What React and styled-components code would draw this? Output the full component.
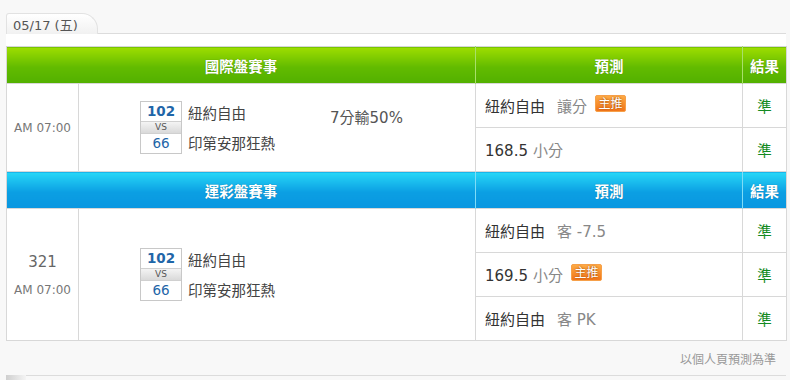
import React from "react";
import styled, { createGlobalStyle } from "styled-components";

const GlobalStyle = createGlobalStyle`
  html, body {
    margin: 0;
    padding: 0;
    background: #ffffff;
    font-family: "DejaVu Sans", "Noto Sans CJK TC", sans-serif;
  }
`;

const Panel = styled.div`
  width: 790px;
  background: #f8f8f8;
  padding-bottom: 4px;
`;

const TabBar = styled.div`
  height: 33px;
  margin: 0 4px 0 6px;
  display: flex;
  align-items: flex-end;
  border-bottom: 1px solid #dcdcdc;
`;

const Tab = styled.div`
  width: 92px;
  height: 21px;
  box-sizing: border-box;
  padding-left: 6px;
  display: flex;
  align-items: center;
  background: linear-gradient(#ffffff, #f1f1f1);
  border: 1px solid #e2e2e2;
  border-bottom: none;
  border-radius: 3px 16px 0 0;
  font-size: 13px;
  color: #555;
  margin-bottom: -1px;
`;

const Content = styled.div`
  background: #fff;
  margin-left: 6px;
  margin-right: 4px;
  padding-top: 12px;
`;

const Table = styled.table`
  width: 780px;
  table-layout: fixed;
  border-collapse: collapse;
  background: #fff;
  border: 1px solid #d6d6d6;
`;

const HeadCell = styled.th`
  height: 37px;
  padding: 0;
  box-sizing: border-box;
  color: #fff;
  font-size: 14.5px;
  font-weight: bold;
  text-align: center;
  text-shadow: 0 0 1px rgba(0, 0, 0, 0.35);
  background: ${(p) =>
    p.$tone === "blue"
      ? "linear-gradient(#27d7f7, #0b9fe3 55%, #0a97e0)"
      : "linear-gradient(#9edd00, #62bb00 55%, #52b000)"};
  border-right: 1px solid
    ${(p) => (p.$tone === "blue" ? "#7fdcf7" : "#a8e06a")};
  &:last-child {
    border-right: none;
  }
`;

const TimeCell = styled.td`
  border: 1px solid #d8d8d8;
  text-align: center;
  vertical-align: middle;
  color: #777;
  padding: 0;
`;

const Num = styled.div`
  font-size: 15px;
  color: #666;
  margin-bottom: 12px;
`;

const Clock = styled.div`
  font-size: 12px;
`;

const MatchCell = styled.td`
  border: 1px solid #d8d8d8;
  vertical-align: middle;
  padding: 0 0 0 61px;
`;

const Match = styled.div`
  display: flex;
  align-items: center;
`;

const ScoreBox = styled.div`
  width: 40px;
  border: 1px solid #c8c8c8;
  display: flex;
  flex-direction: column;
  text-align: center;
`;

const Score = styled.div`
  height: 19px;
  line-height: 19px;
  font-size: 13.5px;
  color: #1f66a8;
  font-weight: ${(p) => (p.$bold ? "bold" : "normal")};
`;

const Vs = styled.div`
  height: 11px;
  line-height: 11px;
  font-size: 9px;
  color: #555;
  background: linear-gradient(#f4f4f4, #d9d9d9);
  border-top: 1px solid #d0d0d0;
  border-bottom: 1px solid #d0d0d0;
`;

const Teams = styled.div`
  width: 142px;
  margin-left: 6px;
  display: flex;
  flex-direction: column;
  gap: 9px;
  font-size: 14.5px;
  color: #444;
`;

const Handicap = styled.div`
  align-self: flex-start;
  margin-top: 5px;
  font-size: 15px;
  color: #555;
`;

const PredCell = styled.td`
  height: 44px;
  box-sizing: border-box;
  border: 1px solid #d8d8d8;
  padding: 0 0 0 9px;
  font-size: 15px;
  color: #333;
  white-space: nowrap;
`;

const Muted = styled.span`
  color: #888;
  margin-left: ${(p) => p.$gap || 0}px;
`;

const Badge = styled.span`
  display: inline-block;
  position: relative;
  top: -4px;
  margin-left: 8px;
  width: 31px;
  height: 17px;
  line-height: 16px;
  box-sizing: border-box;
  text-align: center;
  font-size: 12px;
  color: #fff;
  border-radius: 2px;
  border: 1px solid #f6a04a;
  background: linear-gradient(#fdaa44, #f2761a);
  text-shadow: 0 0 2px #8a3a00;
`;

const ResultCell = styled.td`
  border: 1px solid #d8d8d8;
  text-align: center;
  font-size: 14.5px;
  color: #138a22;
`;

const Note = styled.div`
  height: 34px;
  display: flex;
  align-items: center;
  justify-content: flex-end;
  padding-right: 14px;
  font-size: 12px;
  color: #999;
  background: #f8f8f8;
`;

const BottomLine = styled.div`
  height: 1px;
  margin: 0 4px 0 6px;
  background: #dcdcdc;
  display: flex;
`;

const MiniTab = styled.div`
  width: 20px;
  height: 5px;
  background: linear-gradient(90deg, #cfcfcf, #f4f4f4);
`;

const Pred = ({ team, text, num, unit, hot }) => (
  <>
    {team && team}
    {num && num}
    {text && <Muted $gap={team ? 12 : 0}>{text}</Muted>}
    {unit && <Muted $gap={5}>{unit}</Muted>}
    {hot && <Badge>主推</Badge>}
  </>
);

const MatchBlock = ({ home, away, hs, as, handicap }) => (
  <Match>
    <ScoreBox>
      <Score $bold>{hs}</Score>
      <Vs>VS</Vs>
      <Score>{as}</Score>
    </ScoreBox>
    <Teams>
      <div>{home}</div>
      <div>{away}</div>
    </Teams>
    {handicap && <Handicap>{handicap}</Handicap>}
  </Match>
);

export default function App() {
  return (
    <>
      <GlobalStyle />
      <Panel>
        <TabBar>
          <Tab>05/17 (五)</Tab>
        </TabBar>
        <Content>
          <Table>
            <colgroup>
              <col style={{ width: 72 }} />
              <col style={{ width: 397 }} />
              <col style={{ width: 267 }} />
              <col style={{ width: 44 }} />
            </colgroup>
            <tbody>
              <tr>
                <HeadCell colSpan={2}>國際盤賽事</HeadCell>
                <HeadCell>預測</HeadCell>
                <HeadCell>結果</HeadCell>
              </tr>
              <tr>
                <TimeCell rowSpan={2}>
                  <Clock>AM 07:00</Clock>
                </TimeCell>
                <MatchCell rowSpan={2}>
                  <MatchBlock
                    home="紐約自由"
                    away="印第安那狂熱"
                    hs="102"
                    as="66"
                    handicap="7分輸50%"
                  />
                </MatchCell>
                <PredCell>
                  <Pred team="紐約自由" text="讓分" hot />
                </PredCell>
                <ResultCell>準</ResultCell>
              </tr>
              <tr>
                <PredCell>
                  <Pred num="168.5" unit="小分" />
                </PredCell>
                <ResultCell>準</ResultCell>
              </tr>
              <tr>
                <HeadCell colSpan={2} $tone="blue">運彩盤賽事</HeadCell>
                <HeadCell $tone="blue">預測</HeadCell>
                <HeadCell $tone="blue">結果</HeadCell>
              </tr>
              <tr>
                <TimeCell rowSpan={3}>
                  <Num>321</Num>
                  <Clock>AM 07:00</Clock>
                </TimeCell>
                <MatchCell rowSpan={3}>
                  <MatchBlock home="紐約自由" away="印第安那狂熱" hs="102" as="66" />
                </MatchCell>
                <PredCell>
                  <Pred team="紐約自由" text="客 -7.5" />
                </PredCell>
                <ResultCell>準</ResultCell>
              </tr>
              <tr>
                <PredCell>
                  <Pred num="169.5" unit="小分" hot />
                </PredCell>
                <ResultCell>準</ResultCell>
              </tr>
              <tr>
                <PredCell>
                  <Pred team="紐約自由" text="客 PK" />
                </PredCell>
                <ResultCell>準</ResultCell>
              </tr>
            </tbody>
          </Table>
        </Content>
        <Note>以個人頁預測為準</Note>
        <BottomLine>
          <MiniTab />
        </BottomLine>
      </Panel>
    </>
  );
}
